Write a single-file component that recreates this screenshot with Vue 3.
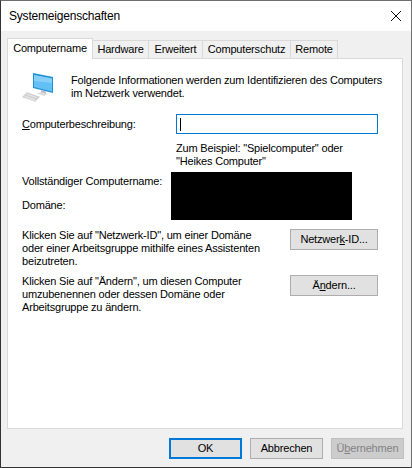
<script setup>
const tabs = [
  { label: 'Computername', width: 86, active: true },
  { label: 'Hardware', width: 56 },
  { label: 'Erweitert', width: 54 },
  { label: 'Computerschutz', width: 88 },
  { label: 'Remote', width: 47 },
];
</script>

<template>
  <div class="window">
    <div class="titlebar">
      <span class="title">Systemeigenschaften</span>
      <svg class="close" width="12" height="12" viewBox="0 0 12 12">
        <path d="M1 1 L11 11 M11 1 L1 11" stroke="#111" stroke-width="1" fill="none" />
      </svg>
    </div>

    <div class="body">
      <div class="tabs">
        <div
          v-for="tab in tabs"
          :key="tab.label"
          class="tab"
          :class="{ active: tab.active }"
          :style="{ width: tab.width + 'px' }"
        >
          {{ tab.label }}
        </div>
      </div>

      <div class="panel">
        <div class="intro">
          <svg class="pc" width="32" height="30" viewBox="0 0 32 30">
            <polygon points="11,0 31,4 31,20 11,15" fill="#1f8fd8" />
            <polygon points="12,2 30,5.500 30,18.500 12,14" fill="#63c0f5" />
            <polygon points="12,2 30,5.500 30,10 12,8" fill="#86d0f8" />
            <polygon points="19,17 24,18.500 24,21 19,19.500" fill="#bdbdbd" />
            <polygon points="15,20.500 19,19 26,21 22,23" fill="#dcdcdc" />
            <polygon points="4.700,19.300 18,23.700 13,28.700 0,24.300" fill="#cfcfcf" />
            <path d="M4 21 L14.500 24.500 M2.500 23 L13 26.500 M1 24.700 L12 27.800" stroke="#f0f0f0" stroke-width="0.800" />
          </svg>
          <p class="intro-text">
            Folgende Informationen werden zum Identifizieren des Computers<br />im Netzwerk verwendet.
          </p>
        </div>

        <div class="desc-row">
          <label class="desc-label"><u>C</u>omputerbeschreibung:</label>
          <div class="input"><span class="caret"></span></div>
        </div>
        <p class="hint">Zum Beispiel: "Spielcomputer" oder<br />"Heikes Computer"</p>

        <div class="names">
          <div class="name-labels">
            <div>Vollständiger Computername:</div>
            <div>Domäne:</div>
          </div>
          <div class="redacted"></div>
        </div>

        <div class="action first">
          <p>Klicken Sie auf "Netzwerk-ID", um einer Domäne<br />oder einer Arbeitsgruppe mithilfe eines Assistenten<br />beizutreten.</p>
          <button class="btn side">Netzwer<u>k</u>-ID...</button>
        </div>
        <div class="action second">
          <p>Klicken Sie auf "Ändern", um diesen Computer<br />umzubenennen oder dessen Domäne oder<br />Arbeitsgruppe zu ändern.</p>
          <button class="btn side">Ä<u>n</u>dern...</button>
        </div>
      </div>

      <div class="footer">
        <button class="btn foot default">OK</button>
        <button class="btn foot">Abbrechen</button>
        <button class="btn foot disabled">Ü<u>b</u>ernehmen</button>
      </div>
    </div>
  </div>
</template>

<style>
html,
body {
  margin: 0;
  background: #f0f0f0;
}
</style>

<style scoped>
.window {
  width: 412px;
  height: 468px;
  box-sizing: border-box;
  border-top: 1px solid #6f6f6f;
  border-right: 1px solid #6f6f6f;
  border-bottom: 1px solid #333;
  border-left: 1px solid #333;
  display: flex;
  flex-direction: column;
  background: #f0f0f0;
  font-family: "Liberation Sans", Arial, sans-serif;
  font-size: 11px;
  letter-spacing: -0.18px;
  line-height: 13px;
  color: #000;
}
.titlebar {
  height: 30px;
  flex: none;
  background: #fff;
  display: flex;
  align-items: center;
  justify-content: space-between;
  padding: 0 9px 0 8px;
}
.title {
  font-size: 12px;
  letter-spacing: -0.2px;
}
.body {
  flex: 1;
  display: flex;
  flex-direction: column;
  padding: 7px 8px 0 6px;
}
.tabs {
  display: flex;
  height: 21px;
  align-items: flex-end;
  position: relative;
  z-index: 1;
  margin-bottom: -1px;
}
.tab {
  box-sizing: border-box;
  height: 18px;
  margin-bottom: 1px;
  border: 1px solid #d9d9d9;
  border-bottom: none;
  border-left: none;
  background: #f0f0f0;
  text-align: center;
  line-height: 17px;
  white-space: nowrap;
}
.tab.active {
  height: 21px;
  margin-bottom: 0;
  border-left: 1px solid #d9d9d9;
  background: #fff;
  line-height: 18px;
}
.panel {
  box-sizing: border-box;
  height: 371px;
  background: #fff;
  border: 1px solid #d9d9d9;
  padding: 14px 24px 0 14px;
}
.intro {
  display: flex;
  height: 41px;
}
.pc {
  flex: none;
  margin-right: 17px;
}
.intro-text {
  margin: 1px 0 0;
  white-space: nowrap;
}
.desc-row {
  display: flex;
  align-items: center;
  height: 20px;
}
.desc-label {
  width: 154px;
}
.input {
  flex: 1;
  height: 20px;
  box-sizing: border-box;
  border: 1px solid #0078d7;
  display: flex;
  align-items: center;
  padding-left: 3px;
}
.caret {
  width: 1px;
  height: 13px;
  background: #000;
}
.hint {
  margin: 8px 0 0 154px;
}
.names {
  display: flex;
  height: 48px;
  margin-top: 4px;
}
.name-labels {
  width: 149px;
  flex: none;
  padding-top: 3px;
  white-space: nowrap;
}
.name-labels div {
  height: 24px;
}
.redacted {
  width: 181px;
  height: 48px;
  background: #000;
}
.action {
  display: flex;
  justify-content: space-between;
  align-items: flex-start;
}
.action p {
  margin: 0;
  white-space: nowrap;
}
.first {
  margin-top: 9px;
}
.second {
  margin-top: 7px;
}
.btn {
  box-sizing: border-box;
  background: #e1e1e1;
  border: 1px solid #adadad;
  padding: 0;
  font: inherit;
  letter-spacing: inherit;
  color: #000;
}
.side {
  width: 88px;
  height: 21px;
}
.footer {
  display: flex;
  justify-content: flex-end;
  gap: 8px;
  margin-top: 9px;
  margin-right: -1px;
}
.foot {
  width: 73px;
  height: 21px;
}
.default {
  border: 2px solid #0078d7;
}
.disabled {
  background: #cccccc;
  border-color: #bfbfbf;
  color: #838383;
}
</style>
